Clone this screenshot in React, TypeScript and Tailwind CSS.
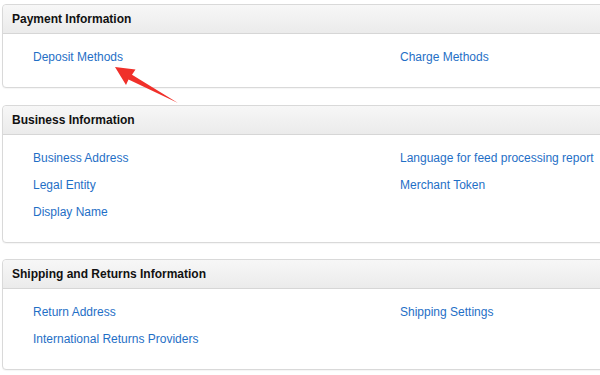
import React from "react";

type Section = { title: string; left: string[]; right: string[]; mt: string };

const sections: Section[] = [
  { title: "Payment Information", left: ["Deposit Methods"], right: ["Charge Methods"], mt: "mt-[4px]" },
  {
    title: "Business Information",
    left: ["Business Address", "Legal Entity", "Display Name"],
    right: ["Language for feed processing report", "Merchant Token"],
    mt: "mt-[17px]",
  },
  {
    title: "Shipping and Returns Information",
    left: ["Return Address", "International Returns Providers"],
    right: ["Shipping Settings"],
    mt: "mt-[16px]",
  },
];

function Card({ s }: { s: Section }) {
  return (
    <div className={`${s.mt} ml-[2px] w-[640px] rounded-[4px] border border-[#d9d9d9] bg-white shadow-[0_1px_1px_rgba(0,0,0,0.04)]`}>
      <div className="flex h-[29px] items-center rounded-t-[4px] border-b border-[#d6d6d6] bg-gradient-to-b from-[#f7f7f7] to-[#ebebeb] pl-[9px] text-[12px] font-bold text-[#111]">
        {s.title}
      </div>
      <div className="flex pt-[9px] pb-[17px]">
        <div className="flex w-[397px] flex-col pl-[30px]">
          {s.left.map((t) => (
            <div key={t} className="flex h-[27px] items-center text-[12px] text-[#1f6fc6]">
              {t}
            </div>
          ))}
        </div>
        <div className="flex flex-col">
          {s.right.map((t) => (
            <div key={t} className="flex h-[27px] items-center text-[12px] text-[#1f6fc6]">
              {t}
            </div>
          ))}
        </div>
      </div>
    </div>
  );
}

export default function App() {
  return (
    <div
      className="relative h-[375px] w-[600px] overflow-hidden bg-white"
      style={{ fontFamily: '"Liberation Sans", Arial, sans-serif' }}
    >
      <div className="flex flex-col">
        {sections.map((s) => (
          <Card key={s.title} s={s} />
        ))}
      </div>
      <svg className="absolute left-0 top-0" width="600" height="375" viewBox="0 0 600 375">
        <polygon
          points="115,67 135.5,69.5 132,74.8 178,103 128.5,79.5 126,85"
          fill="#f0302a"
        />
      </svg>
    </div>
  );
}
